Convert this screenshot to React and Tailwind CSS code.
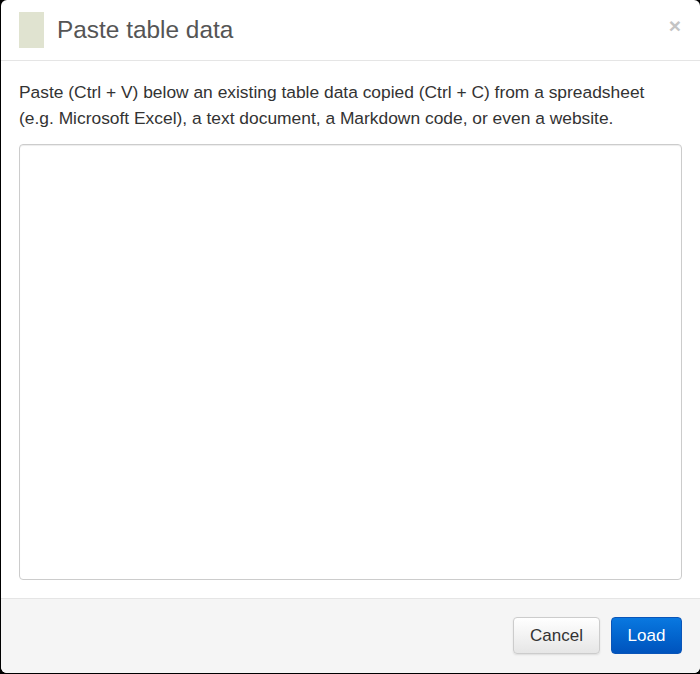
import React, { useState } from 'react';

const App = () => {
  const [data, setData] = useState('');

  return (
    <div className="h-[674px] w-[700px] bg-black overflow-hidden" style={{ fontFamily: '"Liberation Sans", Arial, sans-serif' }}>
      <div className="ml-px h-[673px] w-[699px] bg-white rounded-md flex flex-col overflow-hidden">
        {/* HEADER */}
        <header className="h-[61px] shrink-0 border-b border-[#e5e5e5] flex items-center pl-[18px] pr-[19px]">
          <div className="w-[25px] h-[36px] bg-[#e0e3d0]" />
          <h4 className="ml-[13px] text-[24.4px] leading-none text-[#555]">Paste table data</h4>
          <button className="ml-auto text-[21px] font-bold leading-none text-[#c4c4c4] -mt-[10px]">×</button>
        </header>

        {/* BODY */}
        <main className="flex-1 flex flex-col px-[18px] pt-[18px] pb-[18px]">
          <p className="text-[17.4px] leading-[26px] text-[#333]">
            Paste (Ctrl + V) below an existing table data copied (Ctrl + C) from a spreadsheet
            <br />
            (e.g. Microsoft Excel), a text document, a Markdown code, or even a website.
          </p>
          <textarea
            value={data}
            onChange={(e) => setData(e.target.value)}
            className="mt-[13px] flex-1 w-[663px] resize-none border border-[#ccc] rounded-[4px] shadow-[inset_0_1px_1px_rgba(0,0,0,0.075)] outline-none p-2 text-[14px]"
          />
        </main>

        {/* FOOTER */}
        <footer className="h-[75px] shrink-0 bg-[#f5f5f5] border-t border-[#e5e5e5] flex items-start justify-end gap-[11px] pt-[18px] pr-[18px]">
          <button className="h-[37px] w-[87px] rounded-[4px] border border-[#ccc] bg-gradient-to-b from-white to-[#e6e6e6] text-[17px] text-[#333] shadow-[0_1px_2px_rgba(0,0,0,0.1)]">
            Cancel
          </button>
          <button className="h-[37px] w-[71px] rounded-[4px] border border-[#0a55b8] bg-gradient-to-b from-[#0a78e0] to-[#0053bd] text-[17px] text-white">
            Load
          </button>
        </footer>
      </div>
    </div>
  );
};

export default App;
